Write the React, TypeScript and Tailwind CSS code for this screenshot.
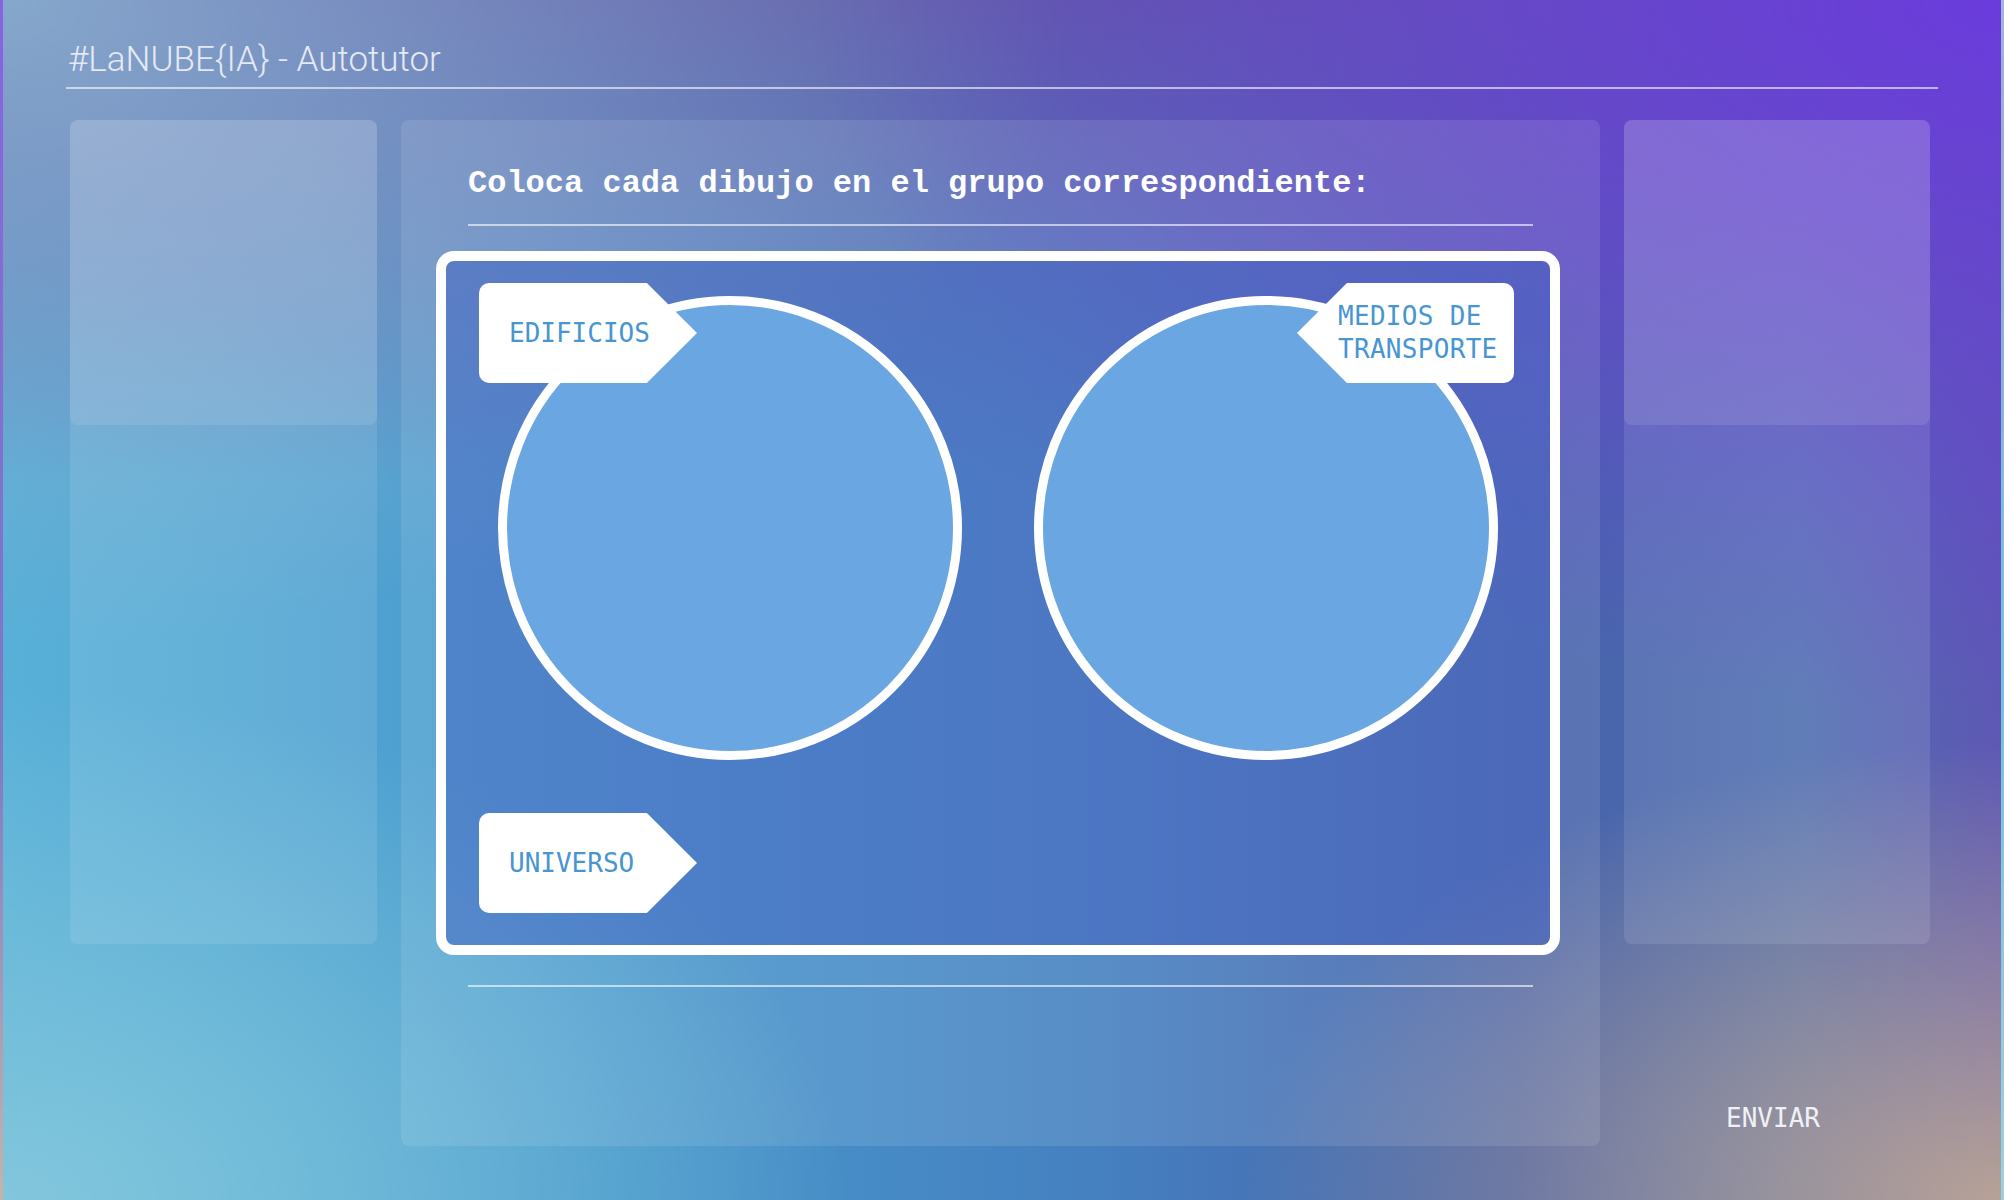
import React from "react";

const Tag = ({ label, dir = "right" }: { label: React.ReactNode; dir?: "right" | "left" }) => {
  if (dir === "left") {
    return (
      <div className="w-[217px] h-[100px] bg-white rounded-r-[10px] [clip-path:polygon(23%_0,100%_0,100%_100%,23%_100%,0_50%)] flex items-center pl-[41px]">
        <span className="font-['DejaVu_Sans_Mono',monospace] text-[26px] leading-[33px] tracking-[0.3px] text-[#4795d2]">{label}</span>
      </div>
    );
  }
  return (
    <div className="w-[218px] h-[100px] bg-white rounded-l-[10px] [clip-path:polygon(0_0,77%_0,100%_50%,77%_100%,0_100%)] flex items-center pl-[30px]">
      <span className="font-['DejaVu_Sans_Mono',monospace] text-[26px] leading-[33px] text-[#4795d2]">{label}</span>
    </div>
  );
};

const SidePanel = () => (
  <div className="h-[824px] rounded-lg bg-white/10">
    <div className="h-[305px] rounded-lg bg-white/10" />
  </div>
);

const App = () => {
  return (
    <div className="w-[2004px] h-[1200px] overflow-hidden flex flex-col border-x-[3px] border-white/20 bg-[image:radial-gradient(ellipse_at_100%_0%,#6a3cdc_0%,transparent_42%),radial-gradient(ellipse_at_100%_100%,#b6a296_0%,transparent_27%),radial-gradient(ellipse_at_0%_0%,#86a8cc_0%,transparent_38%),radial-gradient(ellipse_at_0%_100%,#82c6dc_0%,transparent_30%),linear-gradient(180deg,#605aa8_0%,transparent_40%),linear-gradient(90deg,#58b0d8_0%,#4898cc_30%,#4580c0_55%,#4662aa_76%,#4f6eb0_90%,#5e58b4_100%)]">
      <header className="mx-[63px] pt-[40px] pb-[8px] border-b-2 border-white/60">
        <h1 className="font-['Roboto',sans-serif] font-light text-[35px] leading-[39px] text-[#e4e9f4] pl-[2px]">
          #LaNUBE{"{IA}"} - Autotutor
        </h1>
      </header>

      <main className="flex gap-6 px-[67px] mt-[31px]">
        <div className="w-[307px] shrink-0">
          <SidePanel />
        </div>

        <section className="w-[1199px] h-[1026px] shrink-0 rounded-lg bg-white/10 pt-[46px]">
          <div className="mx-[67px] pb-[22px] border-b-2 border-white/60">
            <h2 className="font-['Liberation_Mono',monospace] font-bold text-[32px] leading-[36px] text-white">
              Coloca cada dibujo en el grupo correspondiente:
            </h2>
          </div>

          <div className="relative ml-[35px] mt-[25px] w-[1124px] h-[704px] rounded-[18px] border-[10px] border-white bg-[#4060c0]/50 pt-[35px] pb-[33px]">
            <div className="flex justify-center gap-[72px]">
              <div className="w-[464px] h-[464px] rounded-full border-[9px] border-white bg-[#6aa6e1]" />
              <div className="w-[464px] h-[464px] rounded-full border-[9px] border-white bg-[#6aa6e1]" />
            </div>

            <div className="absolute left-[33px] top-[22px]">
              <Tag label="EDIFICIOS" />
            </div>
            <div className="absolute right-[36px] top-[22px]">
              <Tag
                dir="left"
                label={
                  <>
                    MEDIOS DE
                    <br />
                    TRANSPORTE
                  </>
                }
              />
            </div>

            <div className="mt-[53px] pl-[33px]">
              <Tag label="UNIVERSO" />
            </div>
          </div>

          <div className="mx-[67px] mt-[30px] border-t-2 border-white/60" />
        </section>

        <div className="w-[306px] shrink-0 flex flex-col">
          <SidePanel />
          <button className="mt-[159px] pr-[8px] font-['DejaVu_Sans_Mono',monospace] text-[26px] leading-[30px] text-[#f0f1f6] text-center">
            ENVIAR
          </button>
        </div>
      </main>
    </div>
  );
};

export default App;
